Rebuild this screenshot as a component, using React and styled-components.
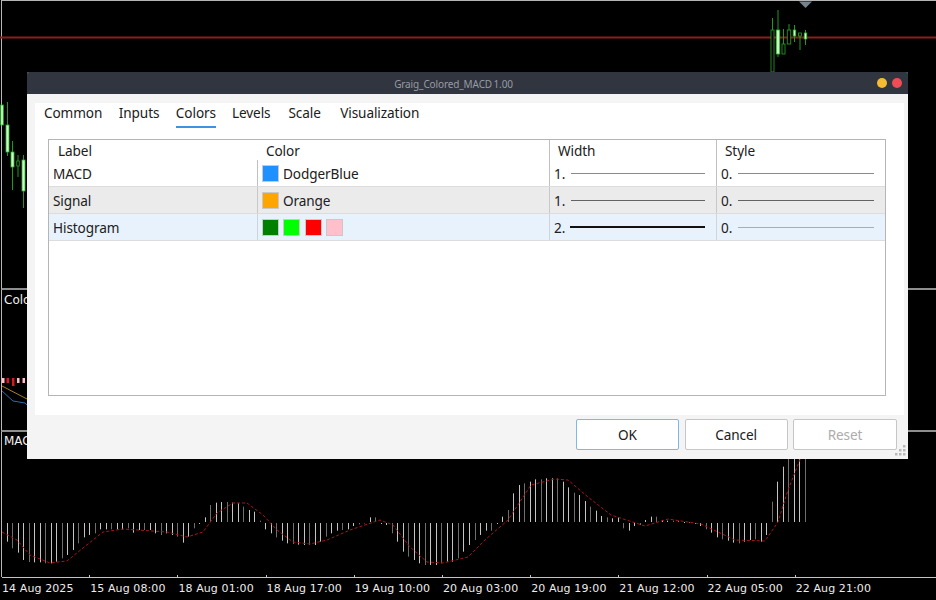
import React from "react";
import styled, { createGlobalStyle } from "styled-components";

const Global = createGlobalStyle`
  html, body { margin: 0; padding: 0; background: #000; }
  body { width: 936px; height: 600px; overflow: hidden; font-family: "Noto Sans", "Open Sans", sans-serif; }
`;

const Stage = styled.div`
  position: relative;
  width: 936px;
  height: 600px;
  background: #000;
  overflow: hidden;
  display: flex;
  flex-direction: column;
`;

const Pane = styled.div`
  position: relative;
  height: ${(p) => p.$h}px;
  flex: none;
  box-sizing: border-box;
  margin-left: 1px;
  border-left: 1.5px solid #b8b8b8;
  border-top: ${(p) => (p.$top ? "1.5px solid #b4b4b4" : "none")};
  border-bottom: ${(p) => (p.$sep ? "2px solid #8e8e8e" : "none")};
  color: #f0f0f0;
  font: 12px "DejaVu Sans", sans-serif;
`;

const PaneLabel = styled.span`
  position: absolute;
  left: 2px;
  top: ${(p) => p.$t}px;
  font-size: 12px;
  line-height: 16px;
`;

const PaneArt = styled.svg`
  position: absolute;
  left: -2.5px;
  top: ${(p) => -p.$y}px;
  width: 936px;
  height: 600px;
  overflow: visible;
`;

const Axis = styled.div`
  flex: none;
  height: 23px;
  margin-left: 2px;
  padding-top: 3px;
  display: grid;
  grid-template-columns: repeat(10, 88.2px);
  border-top: 1px solid #c4c4c4;
  box-sizing: border-box;
`;

const AxisLabel = styled.span`
  position: relative;
  font: 11px/16px "DejaVu Sans", sans-serif;
  letter-spacing: 0.1px;
  color: #ececec;
  white-space: nowrap;
  &::before {
    content: "";
    position: absolute;
    left: -1px;
    top: -6px;
    width: 1px;
    height: 3px;
    background: ${(p) => (p.$first ? "transparent" : "#c4c4c4")};
  }
`;

const Dialog = styled.div`
  position: absolute;
  left: 27px;
  top: 72px;
  width: 881px;
  height: 387px;
  background: #f4f4f4;
  display: flex;
  flex-direction: column;
  border-radius: 2px 2px 0 0;
`;

const TitleBar = styled.div`
  position: relative;
  flex: none;
  height: 22px;
  padding-right: 28px;
  background: #31353f;
  color: #979ba3;
  font-size: 10px;
  letter-spacing: -0.12px;
  word-spacing: -1px;
  line-height: 24px;
  text-align: center;
  border-radius: 2px 2px 0 0;
`;

const WinDot = styled.span`
  position: absolute;
  top: 6px;
  right: ${(p) => p.$r}px;
  width: 10px;
  height: 10px;
  border-radius: 50%;
  background: ${(p) => p.$c};
`;

const Content = styled.div`
  flex: none;
  height: 312px;
  margin: 9px 4px 0 8px;
  background: #fff;
  display: flex;
  flex-direction: column;
  padding: 0 18px 19px 13px;
  box-sizing: border-box;
  font-size: 13.6px;
  letter-spacing: -0.1px;
`;

const Tabs = styled.div`
  flex: none;
  height: 36px;
  display: flex;
  margin-left: -4px;
`;

const Tab = styled.div`
  height: 23px;
  line-height: 20px;
  color: #202020;
  margin-right: ${(p) => p.$gap}px;
  border-bottom: 2.5px solid ${(p) => (p.$active ? "#3f91e4" : "transparent")};
`;

const Table = styled.div`
  flex: 1;
  border: 1px solid #b5b5b5;
  display: flex;
  flex-direction: column;
`;

const columns = "208px 292px 167px 1fr";

const HeaderRow = styled.div`
  flex: none;
  height: 20px;
  display: grid;
  grid-template-columns: ${columns};
`;

const HeadCell = styled.div`
  line-height: 22px;
  color: #202020;
  padding-left: ${(p) => p.$pad}px;
  border-left: ${(p) => (p.$line ? "1px solid #c0c0c0" : "none")};
`;

const Row = styled.div`
  flex: none;
  height: 27px;
  display: grid;
  grid-template-columns: ${columns};
  background: ${(p) => p.$bg};
  box-sizing: border-box;
  border-bottom: ${(p) => (p.$line ? "1px solid #dcdcdc" : "none")};
`;

const Cell = styled.div`
  display: flex;
  align-items: center;
  color: #202020;
  padding-left: 4px;
  border-left: ${(p) => (p.$line ? `1px solid ${p.$line}` : "none")};
  min-width: 0;
`;

const Swatch = styled.span`
  flex: none;
  width: 15px;
  height: 15px;
  border: 1px solid #c9c9c9;
  background: ${(p) => p.$c};
  margin-right: ${(p) => p.$gap}px;
`;

const Stroke = styled.span`
  flex: none;
  width: ${(p) => p.$w}px;
  height: ${(p) => p.$t}px;
  margin-left: ${(p) => p.$l}px;
  background: ${(p) => p.$c};
`;

const Footer = styled.div`
  position: relative;
  flex: 1;
  display: flex;
  justify-content: flex-end;
  gap: 5.5px;
  padding: 4px 11px 0 0;
  align-items: flex-start;
`;

const Button = styled.button`
  width: ${(p) => p.$w}px;
  height: 31px;
  padding: 0;
  background: #fff;
  border: 1px solid ${(p) => (p.$primary ? "#7ab8ee" : "#c6c6c6")};
  border-radius: 2px;
  font: 13.6px "Noto Sans", sans-serif;
  letter-spacing: -0.1px;
  color: ${(p) => (p.$off ? "#adadad" : "#202020")};
`;

const Grip = styled.svg`
  position: absolute;
  right: 2px;
  bottom: 2px;
  width: 12px;
  height: 12px;
`;

const downBarsA = [335,355,368,390,396,397,397,400,400,395,385,375,360,340,322,315,310,298,298,298,298,298,295,308,300,300,300,310,315,310,315,320,338,320,295,282,262,225,218,216,216,218,220,230,240,245,272,298,310,322,332,340,342,344,345,345,345,335,320,310,302,300,298,288,283,280,262,262,282,285,310,335,365,380,390,400,405,405,405,400,395,395,385,365];
const barsB = [435,420,405,392,392,372,350,330,280,255,250,245,238,238,235,235,235,245,262,278,285,303,320,332,348,352,355,352,385,392,378,375,360,350,350,360,362,362,364,366,366,372,378,388,398,412,418,422,428,430,425,420,418,425,405,305,245,200,150,120,100,100];

const bars = [
  ...downBarsA.map((y, i) => [Math.floor((22 + i * 16.5) / 3) + 0.5, 430 + y / 3]),
  ...barsB.map((y, i) => [Math.floor(469.7 + i * 5.5) + 0.5, 400 + y / 3]),
];

const signal =
  "M2,532 L17,540 L30,555 L50,563 L67,561 L83,548 L103,532 L123,529 L167,532 L187,537 L203,532 L217,513 L233,503 L247,503 L263,515 L277,530 L293,542 L310,544 L327,540 L350,530 L380,520 L393,525 L410,547 L427,562 L443,563 L468,557 L485,540 L508,520 L531,485 L555,479 L568,480 L588,497 L611,515 L645,526 L668,519 L701,524 L735,540 L765,541 L778,522 L788,490 L801,457";

const candles = [
  { x: 2, w: 2.5, t: 105, b: 125, top: 105, bot: 125, fill: true },
  { x: 7.5, w: 3, t: 125, b: 152, top: 102, bot: 156, fill: true },
  { x: 12.5, w: 3, t: 152, b: 167, top: 141, bot: 190, fill: true },
  { x: 18, w: 2.5, t: 161, b: 166, top: 155, bot: 177, fill: false },
  { x: 23.5, w: 3, t: 160, b: 191, top: 155, bot: 208, fill: true },
  { x: 772.5, w: 3, t: 30, b: 72, top: 18, bot: 72, fill: false },
  { x: 778, w: 3.5, t: 30, b: 54, top: 10, bot: 57, fill: true },
  { x: 783.5, w: 3, t: 44, b: 54, top: 29, bot: 54, fill: false },
  { x: 789, w: 3.5, t: 30, b: 44, top: 24, bot: 44, fill: false },
  { x: 794.5, w: 2.5, t: 30, b: 36, top: 25, bot: 42, fill: true },
  { x: 800, w: 3, t: 33, b: 36, top: 33, bot: 50, fill: false },
  { x: 805.5, w: 2.5, t: 33, b: 39, top: 30, bot: 45, fill: true },
];

const macdBars = [[2,3,"#ffc0cb"],[6.5,3,"#d81820"],[12,6,"#d81820"],[17,3,"#ffc0cb"],[22.5,3,"#ffc0cb"]];
const axisLabels = ["14 Aug 2025","15 Aug 08:00","18 Aug 01:00","18 Aug 17:00","19 Aug 10:00","20 Aug 03:00","20 Aug 19:00","21 Aug 12:00","22 Aug 05:00","22 Aug 21:00"];
const tabs = [["Common", 16.5], ["Inputs", 16.5], ["Colors", 16], ["Levels", 18], ["Scale", 19.5], ["Visualization", 0]];
const swatches = ["#008000", "#00ff00", "#ff0000", "#ffc0cb"];

export default function App() {
  return (
    <Stage>
      <Global />
      <Pane $h={290} $top $sep>
        <PaneArt $y={1.5} viewBox="0 0 936 600">
          <rect x="0" y="36.5" width="936" height="2" fill="#8a1f1f" />
          <path d="M799 1.5 H812 L805.5 8 Z" fill="#76838f" />
          {candles.map((c, i) => (
            <g key={i}>
              <line x1={c.x} x2={c.x} y1={c.top} y2={c.bot} stroke="#1f9a1f" strokeWidth="1" />
              <rect x={c.x - c.w / 2} y={c.t} width={c.w} height={c.b - c.t} fill={c.fill ? "#c9ffc4" : "#000"} stroke={c.fill ? "#2fb52f" : "#26a626"} strokeWidth="0.8" />
            </g>
          ))}
        </PaneArt>
      </Pane>
      <Pane $h={142} $sep>
        <PaneLabel $t={2}>Color</PaneLabel>
        <PaneArt $y={290} viewBox="0 0 936 600">
          {macdBars.map(([x, h, c], i) => (
            <rect key={i} x={x} y={378} width={2.5} height={h + 2} fill={c} />
          ))}
          <path d="M2 386 L27 399" stroke="#a8801e" fill="none" />
          <path d="M2 391 L13 401 L25 403 L27 405" stroke="#2d6ca8" fill="none" />
        </PaneArt>
      </Pane>
      <Pane $h={145}>
        <PaneLabel $t={1}>MACD</PaneLabel>
        <PaneArt $y={432} viewBox="0 0 936 600">
          {bars.map(([x, y], i) => (
            <line key={i} x1={x} x2={x} y1={y < 522 ? 522 : 523} y2={y} stroke={i % 3 === 1 ? "#6e6e6e" : "#c4c4c4"} strokeWidth="1" />
          ))}
          <path d={signal} fill="none" stroke="#a81616" strokeWidth="1" strokeDasharray="3 2" />
        </PaneArt>
      </Pane>
      <Axis>
        {axisLabels.map((t, i) => (
          <AxisLabel key={t} $first={i === 0}>{t}</AxisLabel>
        ))}
      </Axis>
      <Dialog>
        <TitleBar>
          Graig_Colored_MACD 1.00
          <WinDot $r={21} $c="#f4bb33" />
          <WinDot $r={6} $c="#ef4c55" />
        </TitleBar>
        <Content>
          <Tabs>
            {tabs.map(([t, gap]) => (
              <Tab key={t} $gap={gap} $active={t === "Colors"}>{t}</Tab>
            ))}
          </Tabs>
          <Table>
            <HeaderRow>
              <HeadCell $pad={9}>Label</HeadCell>
              <HeadCell $pad={9}>Color</HeadCell>
              <HeadCell $pad={8} $line>Width</HeadCell>
              <HeadCell $pad={8} $line>Style</HeadCell>
            </HeaderRow>
            <Row $bg="#fff" $line>
              <Cell>MACD</Cell>
              <Cell $line="#c0c0c0"><Swatch $c="#1e90ff" $gap={4} />DodgerBlue</Cell>
              <Cell $line="#c0c0c0">1.<Stroke $w={134} $t={1} $l={5.5} $c="#8a8a8a" /></Cell>
              <Cell $line="#c0c0c0">0.<Stroke $w={136} $t={1} $l={5.5} $c="#8a8a8a" /></Cell>
            </Row>
            <Row $bg="#ebebeb" $line>
              <Cell>Signal</Cell>
              <Cell $line="#c8c8c8"><Swatch $c="#ffa500" $gap={4} />Orange</Cell>
              <Cell $line="#c8c8c8">1.<Stroke $w={134} $t={1} $l={5.5} $c="#636363" /></Cell>
              <Cell $line="#c8c8c8">0.<Stroke $w={136} $t={1} $l={5.5} $c="#636363" /></Cell>
            </Row>
            <Row $bg="#e8f2fc" $line>
              <Cell>Histogram</Cell>
              <Cell $line="#d0d4d8">
                {swatches.map((c) => <Swatch key={c} $c={c} $gap={4.3} />)}
              </Cell>
              <Cell $line="#d0d4d8">2.<Stroke $w={135} $t={2} $l={5} $c="#111" /></Cell>
              <Cell $line="#d0d4d8">0.<Stroke $w={136} $t={1} $l={5.5} $c="#a8adb2" /></Cell>
            </Row>
          </Table>
        </Content>
        <Footer>
          <Button $w={103} $primary>OK</Button>
          <Button $w={103}>Cancel</Button>
          <Button $w={104} $off>Reset</Button>
          <Grip viewBox="0 0 12 12">
            {[[9,0],[5,4],[9,4],[1,8],[5,8],[9,8]].map(([x, y]) => (
              <rect key={`${x}-${y}`} x={x} y={y} width="2.5" height="2.5" fill="#b9b9b9" />
            ))}
          </Grip>
        </Footer>
      </Dialog>
    </Stage>
  );
}
